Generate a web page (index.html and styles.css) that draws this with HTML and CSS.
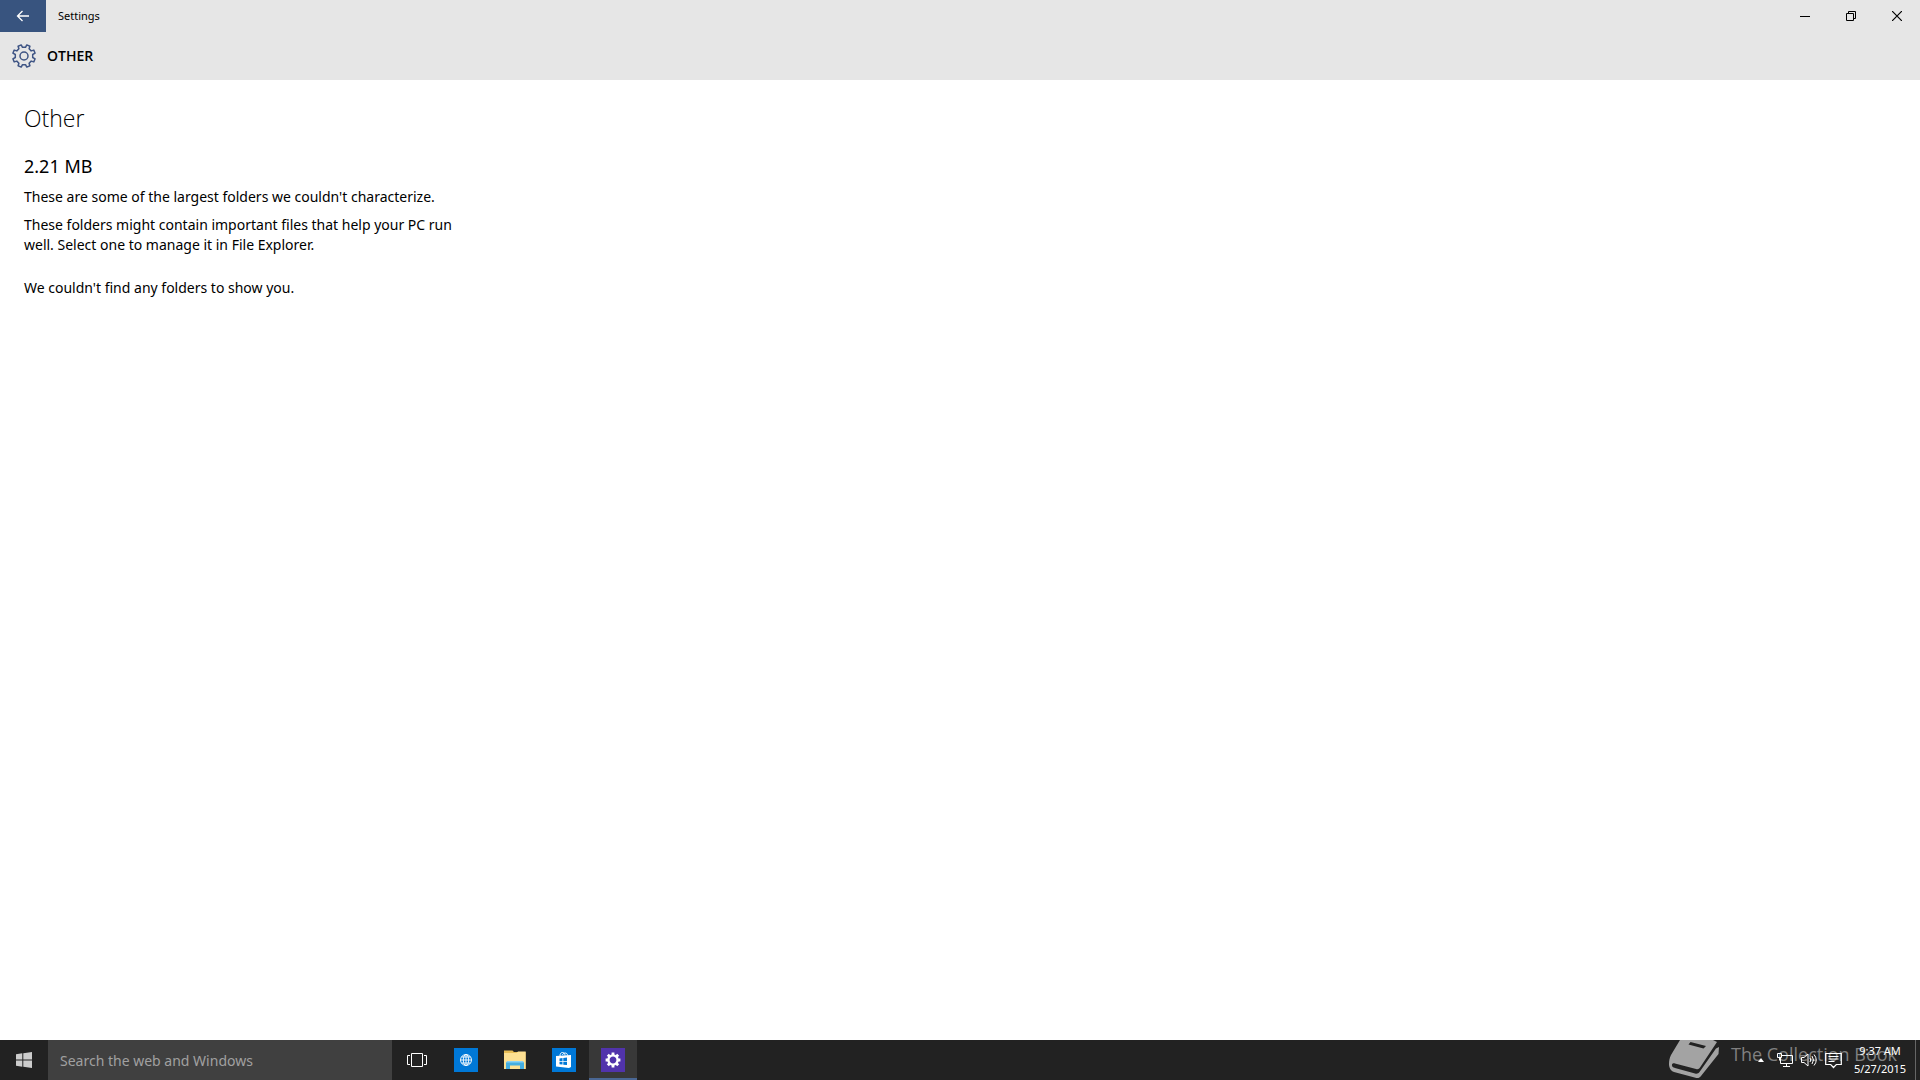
FILE: index.html
```
<!DOCTYPE html>
<html lang="en">

<head>
  <meta charset="UTF-8">
  <title>Settings</title>

  <link rel="stylesheet" href="styles.css">
</head>

<body>
  <header class="titlebar">
    <button class="back" aria-label="Back">
      <svg width="14" height="12" viewBox="0 0 14 12" fill="none" stroke="#fff" stroke-width="1.3"><path d="M13 6H1.500M6.500 1L1.500 6l5 5"/></svg>
    </button>
    <span class="app-name">Settings</span>
    <div class="window-buttons">
      <button aria-label="Minimize">
        <svg width="10" height="10" viewBox="0 0 10 10"><path d="M0 5h10v1H0z"/></svg>
      </button>
      <button aria-label="Restore">
        <svg width="10" height="10" viewBox="0 0 10 10" fill="none" stroke="#000"><path d="M.5 2.500h7v7h-7zM2.500 2.500v-2h7v7h-2"/></svg>
      </button>
      <button aria-label="Close">
        <svg width="10" height="10" viewBox="0 0 10 10" fill="none" stroke="#000" stroke-width="1.200"><path d="M0 0l10 10M10 0L0 10"/></svg>
      </button>
    </div>
  </header>

  <div class="section-bar">
    <svg width="24" height="24" viewBox="-12 -12 24 24" fill="none" stroke="#3f5585" stroke-width="1.500" stroke-linejoin="round">
      <path d="M-1.500-8.700L-2.800-11.100L-5.900-9.800L-5.100-7.200L-7.200-5.100L-9.800-5.900L-11.100-2.800L-8.700-1.500V1.500L-11.100 2.800L-9.800 5.900L-7.200 5.100L-5.100 7.200L-5.900 9.800L-2.800 11.100L-1.500 8.700H1.500L2.800 11.100L5.900 9.800L5.100 7.200L7.200 5.100L9.800 5.900L11.100 2.800L8.700 1.500V-1.500L11.100-2.800L9.800-5.900L7.200-5.100L5.100-7.200L5.900-9.800L2.800-11.100L1.500-8.700z"/>
      <circle r="4"/>
    </svg>
    <h1>OTHER</h1>
  </div>

  <main>
    <h2>Other</h2>
    <p class="size">2.21 MB</p>
    <p>These are some of the largest folders we couldn't characterize.</p>
    <p>These folders might contain important files that help your PC run well. Select one to manage it in File Explorer.</p>
    <p class="empty">We couldn't find any folders to show you.</p>
  </main>

  <footer class="taskbar">
    <button class="start" aria-label="Start">
      <svg width="16" height="16" viewBox="0 0 16 16" fill="#ccc"><path d="M0 2.200L6.300 1.300V7.500H0zM7.300 1.200L16 0v7.500H7.300zM0 8.500h6.300v6.200L0 13.800zM7.300 8.500H16V16l-8.700-1.200z"/></svg>
    </button>
    <input class="search" type="text" aria-label="Search" placeholder="Search the web and Windows">

    <nav class="apps">
      <button aria-label="Task View">
        <svg width="20" height="14" viewBox="0 0 20 14" fill="none" stroke="#fff"><path d="M4.500.5h11v13h-11zM3 2.500H.5v9H3M17 2.500h2.500v9H17"/></svg>
      </button>
      <button aria-label="Browser">
        <svg width="24" height="24" viewBox="0 0 24 24"><path fill="#0078d7" d="M0 0h24v24H0z"/><g fill="none" stroke="#fff" stroke-width=".9"><circle cx="12" cy="12" r="5.500"/><ellipse cx="12" cy="12" rx="2.700" ry="5.500"/><path d="M6.500 12h11M12 6.500v11M7.500 9h9M7.500 15h9"/></g></svg>
      </button>
      <button aria-label="File Explorer">
        <svg width="22" height="20" viewBox="0 0 22 20"><path fill="#e8bd55" d="M0 .5h8.500l1.500 1.500h11.500V19H0z"/><path fill="#fde092" d="M0 3h12.500l1.500-1.500h7.700V19H0z"/><path fill="#45aee0" d="M2 19v-6.500l1.500-1.500h15l1.500 1.500V19h-4v-3.500H6V19z"/><path fill="#8bd3f5" d="M3.500 11h15l1.500 1.500H2z"/></svg>
      </button>
      <button aria-label="Store">
        <svg width="24" height="24" viewBox="0 0 24 24"><path fill="#0078d7" d="M0 0h24v24H0z"/><path fill="none" stroke="#fff" d="M8 8c0-2.500 1-3.500 2.500-3.500S13 6 13 7.500M10.500 7c.5-2.500 5-3 5 .5"/><path fill="#fff" d="M4 8l15-1v12l-2 1-13-1.500z"/><path fill="#0078d7" d="M7.500 10.500l3-.4v2.900h-3zM11.300 10l3.700-.4V13h-3.700zM7.500 13.700h3v2.900l-3-.4zM11.300 13.700H15v3.400l-3.700-.4z"/></svg>
      </button>
      <button class="active" aria-label="Settings">
        <svg width="24" height="24" viewBox="-12 -12 24 24"><path fill="#5133ab" d="M-12-12h24v24h-24z"/><g fill="none" stroke="#fff"><circle r="4.600" stroke-width="2.400"/><path stroke-width="2.800" d="M0-7.400v2.600M0 7.400v-2.600M-7.400 0h2.600M7.400 0h-2.600M-5.200-5.200l1.800 1.800M5.200 5.200l-1.800-1.800M-5.200 5.200l1.800-1.800M5.200-5.200l-1.800 1.800"/></g></svg>
      </button>
    </nav>

    <div class="watermark">
      <svg width="50" height="38" viewBox="0 0 50 38"><path fill="#a3a3a3" fill-rule="evenodd" d="M11 0h33l4 2-17 25.500c-1 1.500-2 2-4 1.500L6 23.500c-2-.5-3.500.5-3 2 .2 1.500 1.500 2 3 2.500l20 5.500c2 .5 3.500 0 4.500-1.500L47 8.500l3-1.500-.5 7L32 36c-1.500 2-3 2.500-5.500 1.700L5 32c-3-1-5-4-5-8 0-3 .5-6 2-9zM21.500 2l-2 2.500 15 4 2.500-2.500z"/></svg>
      <span>The Collection Book</span>
    </div>

    <div class="tray">
      <button aria-label="Show hidden icons">
        <svg width="6" height="4" viewBox="0 0 6 4" fill="#fff"><path d="M0 4l3-4 3 4z"/></svg>
      </button>
      <button aria-label="Network">
        <svg width="16" height="16" viewBox="0 0 16 16" fill="none" stroke="#fff"><path d="M5 3.500h10.500v8H3.500V6M9.500 11.500v3M6 14.500h7M.5 1.500h4v4h-4zM2.500 5.500v3"/></svg>
      </button>
      <button aria-label="Volume">
        <svg width="16" height="16" viewBox="0 0 16 16" fill="none" stroke="#fff"><path d="M.5 5.500H3l4-3.500v12L3 10.500H.5zM9 6q1.500 2 0 4M11 4q3 4 0 8M13 2.500q4.500 5.500 0 11"/></svg>
      </button>
      <button aria-label="Notifications">
        <svg width="17" height="17" viewBox="0 0 17 17" fill="none" stroke="#fff" stroke-width="1.200"><path d="M.7 1.500h15.600v11h-5L8.500 15.500l-2.800-3h-5zM3.500 4.500h10M3.500 7h10M3.500 9.500h6"/></svg>
      </button>
      <button class="clock"><time>9:37 AM</time><time>5/27/2015</time></button>
      <button class="show-desktop" aria-label="Show desktop"></button>
    </div>
  </footer>
</body>

</html>
```
FILE: styles.css
```
* {
  box-sizing: border-box;
}
body {
  display: flex;
  flex-direction: column;
  min-height: 100vh;
  margin: 0;
  background: #fff;
  color: #000;
  font: 14px/20px "Noto Sans", "Open Sans", sans-serif;
}
button {
  display: flex;
  align-items: center;
  justify-content: center;
  padding: 0;
  border: 0;
  background: none;
  font: inherit;
}
.titlebar {
  display: flex;
  height: 32px;
  background: #e6e6e6;
}
.back {
  width: 46px;
  background: #38547f;
}
.app-name {
  margin-left: 12px;
  font-size: 11px;
  line-height: 32px;
}
.window-buttons {
  display: flex;
  margin-left: auto;
}
.window-buttons button {
  width: 46px;
}
.section-bar {
  display: flex;
  align-items: center;
  gap: 11px;
  height: 48px;
  padding: 0 12px;
  background: #e6e6e6;
}
h1 {
  margin: 0;
  font: 600 14px/22px "Open Sans", "Noto Sans", sans-serif;
}
main {
  flex: 1;
  max-width: 480px;
  padding: 22px 24px;
}
h2 {
  margin: 0 0 20px;
  font: 300 23px/32px "Open Sans", "Noto Sans", sans-serif;
}
main p {
  margin: 0 0 8px;
}
main .size {
  margin-bottom: 9px;
  font-size: 18px;
  line-height: 24px;
}
main .empty {
  margin-top: 23px;
}
.taskbar {
  position: relative;
  display: flex;
  height: 40px;
  background: #222;
  color: #fff;
}
.start {
  width: 48px;
}
.search {
  width: 344px;
  padding: 0 12px;
  border: 0;
  background: #404040;
  color: #fff;
  font: 14px "Noto Sans", "Open Sans", sans-serif;
}
.search::placeholder {
  color: #a0a0a0;
}
.apps {
  display: flex;
  gap: 1px;
  margin-left: 1px;
}
.apps button {
  width: 48px;
}
.apps .active {
  background: #383838;
  box-shadow: inset 0 -2px #4a6794;
}
.watermark {
  position: absolute;
  top: 0;
  right: 23px;
  display: flex;
  gap: 12px;
  color: #808080;
  font: 18px/28px "Open Sans", "Noto Sans", sans-serif;
}
.tray {
  position: relative;
  display: flex;
  margin-left: auto;
}
.tray button {
  width: 24px;
  color: #fff;
}
.tray .clock {
  flex-direction: column;
  width: 70px;
  font-size: 11px;
  line-height: 18px;
}
.tray .show-desktop {
  width: 5px;
  border-left: 1px solid #666;
}
```
